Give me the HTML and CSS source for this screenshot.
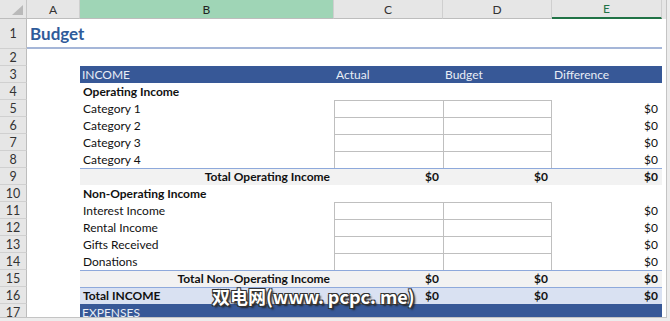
FILE: index.html
```html
<!DOCTYPE html>
<html lang="en">
<head>
    <meta charset="UTF-8">
    <meta name="viewport" content="width=device-width, initial-scale=1.0">
    <title>Budget</title>
    <link rel="stylesheet" href="styles.css">
</head>
<body>
    <div class="sheet">
        <div class="row heads">
            <div class="corner"><span class="tri"></span></div>
            <div class="ch">A</div>
            <div class="ch sel">B</div>
            <div class="ch">C</div>
            <div class="ch">D</div>
            <div class="ch active">E</div>
        </div>

        <div class="row r1">
            <div class="rh">1</div>
            <div class="title">Budget</div>
        </div>

        <div class="row">
            <div class="rh">2</div>
        </div>

        <div class="row">
            <div class="rh">3</div>
            <div class="c"></div>
            <div class="c band">INCOME</div>
            <div class="c band">Actual</div>
            <div class="c band">Budget</div>
            <div class="c band">Difference</div>
        </div>

        <div class="row">
            <div class="rh">4</div>
            <div class="c"></div>
            <div class="c b">Operating Income</div>
        </div>

        <div class="row">
            <div class="rh">5</div>
            <div class="c"></div>
            <div class="c">Category 1</div>
            <div class="c inp"></div>
            <div class="c inp last"></div>
            <div class="c num">$0</div>
        </div>
        <div class="row">
            <div class="rh">6</div>
            <div class="c"></div>
            <div class="c">Category 2</div>
            <div class="c inp"></div>
            <div class="c inp last"></div>
            <div class="c num">$0</div>
        </div>
        <div class="row">
            <div class="rh">7</div>
            <div class="c"></div>
            <div class="c">Category 3</div>
            <div class="c inp"></div>
            <div class="c inp last"></div>
            <div class="c num">$0</div>
        </div>
        <div class="row">
            <div class="rh">8</div>
            <div class="c"></div>
            <div class="c">Category 4</div>
            <div class="c inp"></div>
            <div class="c inp last"></div>
            <div class="c num">$0</div>
        </div>

        <div class="row">
            <div class="rh">9</div>
            <div class="c"></div>
            <div class="c total num b">Total Operating Income</div>
            <div class="c total num b">$0</div>
            <div class="c total num b">$0</div>
            <div class="c total num b">$0</div>
        </div>

        <div class="row">
            <div class="rh">10</div>
            <div class="c"></div>
            <div class="c b">Non-Operating Income</div>
        </div>

        <div class="row">
            <div class="rh">11</div>
            <div class="c"></div>
            <div class="c">Interest Income</div>
            <div class="c inp"></div>
            <div class="c inp last"></div>
            <div class="c num">$0</div>
        </div>
        <div class="row">
            <div class="rh">12</div>
            <div class="c"></div>
            <div class="c">Rental Income</div>
            <div class="c inp"></div>
            <div class="c inp last"></div>
            <div class="c num">$0</div>
        </div>
        <div class="row">
            <div class="rh">13</div>
            <div class="c"></div>
            <div class="c">Gifts Received</div>
            <div class="c inp"></div>
            <div class="c inp last"></div>
            <div class="c num">$0</div>
        </div>
        <div class="row">
            <div class="rh">14</div>
            <div class="c"></div>
            <div class="c">Donations</div>
            <div class="c inp"></div>
            <div class="c inp last"></div>
            <div class="c num">$0</div>
        </div>

        <div class="row">
            <div class="rh">15</div>
            <div class="c"></div>
            <div class="c total num b">Total Non-Operating Income</div>
            <div class="c total num b">$0</div>
            <div class="c total num b">$0</div>
            <div class="c total num b">$0</div>
        </div>

        <div class="row">
            <div class="rh">16</div>
            <div class="c"></div>
            <div class="c grand b">Total INCOME</div>
            <div class="c grand num b">$0</div>
            <div class="c grand num b">$0</div>
            <div class="c grand num b">$0</div>
        </div>

        <div class="row">
            <div class="rh">17</div>
            <div class="c"></div>
            <div class="c band">EXPENSES</div>
            <div class="c band"></div>
            <div class="c band"></div>
            <div class="c band"></div>
        </div>

        <div class="watermark">双电网(www. pcpc. me)</div>
    </div>
</body>
</html>
```

FILE: styles.css
```css
* {
    box-sizing: border-box;
}
body {
    margin: 0;
    background: #ececec;
    font-family: Lato, "Noto Sans", sans-serif;
    font-size: 12px;
    color: #111;
}
.sheet {
    position: relative;
    width: 667px;
    height: 318px;
    overflow: hidden;
    background: #fff;
    border-right: 1px solid #c4c4c4;
    border-bottom: 1px solid #c4c4c4;
}
.row {
    display: grid;
    grid-template-columns: 27px 53px 254px 109px 109px 110px;
    height: 17px;
}
.heads {
    height: 19px;
    background: #e6e6e6;
}
.corner {
    position: relative;
    border-right: 1px solid #c6c6c6;
    border-bottom: 1px solid #bdbdbd;
}
.tri {
    position: absolute;
    right: 3px;
    bottom: 3px;
    width: 0;
    height: 0;
    border-left: 11px solid transparent;
    border-bottom: 10px solid #b9b9b9;
}
.ch {
    display: flex;
    justify-content: center;
    align-items: center;
    border-right: 1px solid #cfcfcf;
    border-bottom: 1px solid #bdbdbd;
    color: #333;
    font-size: 12px;
}
.ch.sel {
    background: #9fd5b6;
    color: #222;
}
.ch.active {
    color: #217346;
    border-bottom: 2px solid #217346;
}
.rh {
    display: flex;
    justify-content: center;
    align-items: center;
    background: #e6e6e6;
    border-right: 1px solid #bdbdbd;
    border-bottom: 1px solid #d0d0d0;
    color: #333;
    font-size: 12.5px;
}
.r1 {
    height: 30px;
}
.title {
    grid-column: 2 / 7;
    padding: 4px 0 0 3px;
    border-bottom: 2px solid #a5b6d8;
    color: #2f5b9a;
    font-size: 17px;
    font-weight: 700;
}
.c {
    padding: 0 3px;
    line-height: 17px;
    white-space: nowrap;
}
.b {
    font-weight: 700;
}
.num {
    text-align: right;
    padding-right: 4px;
}
.band {
    background: #375897;
    color: #e9edf6;
    padding-left: 2px;
}
.inp {
    border-top: 1px solid #bfbfbf;
    border-left: 1px solid #bfbfbf;
}
.inp.last {
    border-right: 1px solid #bfbfbf;
}
.total {
    background: #f2f2f2;
    border-top: 1px solid #8ea9db;
    line-height: 16px;
}
.grand {
    background: #d9e1f2;
    border-top: 1px solid #8ea9db;
    line-height: 16px;
}
.watermark {
    position: absolute;
    left: 212px;
    top: 285px;
    font-family: "Noto Sans CJK SC", sans-serif;
    font-size: 18px;
    font-weight: 700;
    line-height: 22px;
    color: #fff;
    text-shadow: 1px 1px 0 #333, -1px -1px 0 #333, 1px -1px 0 #333, -1px 1px 0 #333, 2px 2px 2px #222;
}
```
